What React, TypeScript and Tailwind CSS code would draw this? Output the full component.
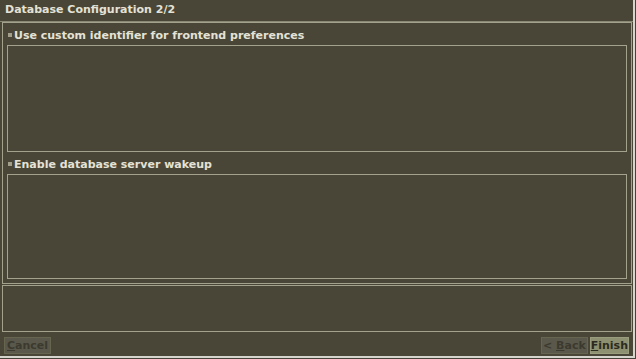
import React from "react";

const font = { fontFamily: '"DejaVu Sans", "Liberation Sans", sans-serif' };

function Label({ text }: { text: string }) {
  return (
    <div className="flex h-[14px] items-center gap-[2px] pl-[5px]">
      <span className="h-[4px] w-[4px] bg-[#a19f89]" />
      <span className="text-[11px] font-bold leading-none text-[#e4e2d6]">{text}</span>
    </div>
  );
}

function Btn({ pre, mn, rest, pad, primary }: { pre?: string; mn: string; rest: string; pad: string; primary?: boolean }) {
  return (
    <div
      className={
        (primary
          ? "flex h-[17px] items-center border border-[#9a9c7e] bg-[#8e9171] text-[11px] font-bold leading-none text-[#2b2b20] "
          : "flex h-[17px] items-center border border-[#66654f] bg-[#59584a] text-[11px] font-bold leading-none text-[#3c3a2f] ") + pad
      }
    >
      <span className="whitespace-pre">
        {pre}
        <span className="underline">{mn}</span>
        {rest}
      </span>
    </div>
  );
}

export default function App() {
  return (
    <div style={font} className="h-[359px] w-[636px] overflow-hidden bg-[#45423a]">
      <div className="flex h-[358px] w-[635px] flex-col border-b-2 border-r-2 border-[#d6d5cd] bg-[#4a4637]">
        <div className="flex h-[21px] items-center pl-[5px] text-[11px] font-bold text-[#e4e2d6]">
          Database Configuration 2/2
        </div>
        <div className="flex flex-1 flex-col border-t border-[#8a8975] pr-[1px]">
          <div className="ml-[2px] flex flex-col border border-[#a3a28c] pb-[4px]">
            <div className="mt-[5px]">
              <Label text="Use custom identifier for frontend preferences" />
            </div>
            <div className="ml-[4px] mr-[4px] mt-[3px] h-[107px] border border-[#a3a28c]" />
            <div className="mt-[5px]">
              <Label text="Enable database server wakeup" />
            </div>
            <div className="ml-[4px] mr-[4px] mt-[3px] h-[105px] border border-[#a3a28c]" />
          </div>
          <div className="ml-[2px] mt-[1px] h-[47px] border border-[#a3a28c]" />
          <div className="mt-[5px] flex items-center pl-[4px] pr-[3px]">
            <Btn mn="C" rest="ancel" pad="px-[2px]" />
            <div className="flex-1" />
            <Btn pre="< " mn="B" rest="ack" pad="px-[1px]" />
            <div className="w-[2px]" />
            <Btn mn="F" rest="inish" pad="px-0" primary />
          </div>
        </div>
      </div>
    </div>
  );
}
